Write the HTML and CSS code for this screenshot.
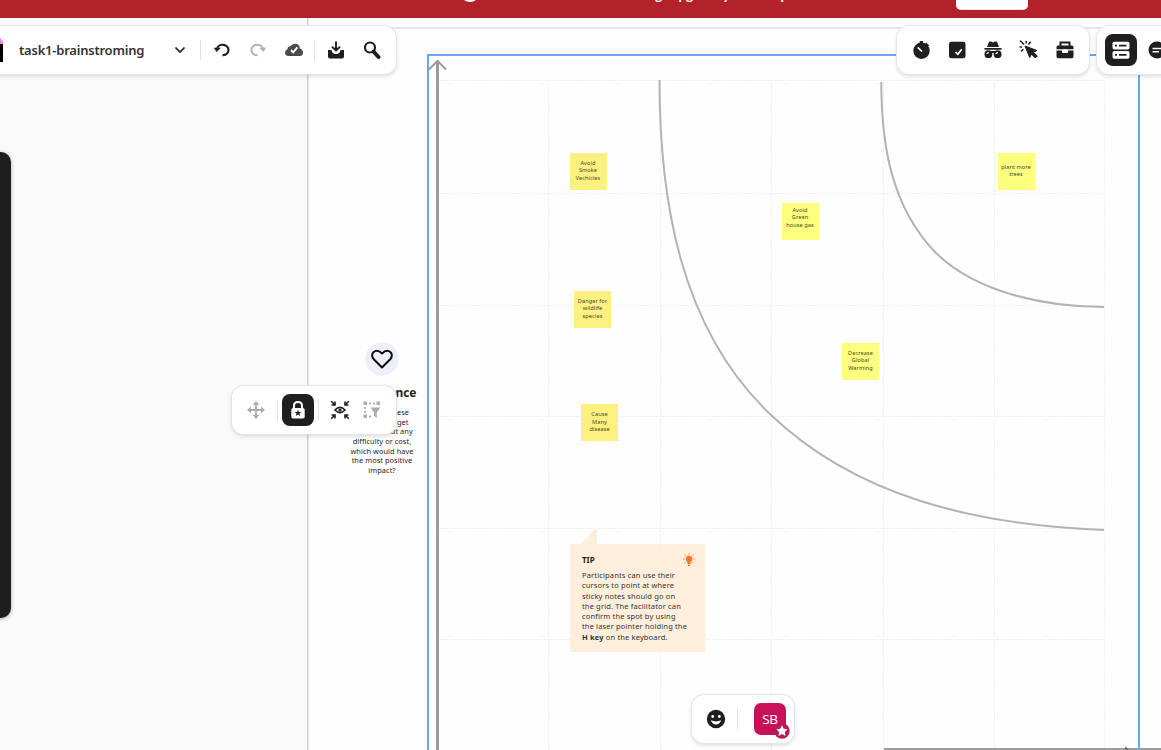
FILE: index.html
```
<!DOCTYPE html>
<html lang="en">
<head>
<meta charset="utf-8">
<title>task1-brainstroming</title>
<link rel="stylesheet" href="styles.css">
</head>
<body>
<div class="app">
  <main class="board">
    <svg class="lines" width="1161" height="750" viewBox="0 0 1161 750" fill="none">
      <rect x="308" y="18" width="900" height="800" fill="#fefefe" stroke="none"/>
      <path d="M308 28H1161" stroke="#e8e8e8" stroke-width="2"/>
      <path d="M307.800 18V750" stroke="#cfcfcf" stroke-width="1.400"/>
      <g stroke="#f3f3f3" stroke-dasharray="9 1.500">
        <path d="M439 80.500H1105M439 193.500H1105M439 305.500H1105M439 416.500H1105M439 528.500H1105M439 639.500H1105"/>
        <path d="M548.500 82V750M660.500 82V750M771.500 82V750M883.500 82V750M994.500 82V750M1104.500 82V750"/>
      </g>
      <g stroke="#b3b3b3" stroke-width="2">
        <path d="M659.500 80C659.500 200 680 329 771 415C856 496 974 525 1104 530"/>
        <path d="M881.300 82C881.300 144 891 206 935 252C975 292 1044 307 1104 307"/>
      </g>
      <g stroke="#9c9c9c">
        <path d="M437.500 61V750" stroke-width="3"/>
        <path d="M429 69.500L437.500 61L446 69.500" stroke-width="2"/>
        <path d="M884 749.500H1161" stroke-width="3"/>
        <path d="M1125 747.500L1128 750" stroke="#666" stroke-width="2"/>
      </g>
      <path d="M428 750V55H1139V750" stroke="#68a5f3" stroke-width="2"/>
    </svg>

    <section class="importance">
      <svg class="heart" width="34" height="34" viewBox="0 0 34 34"><circle cx="17" cy="17" r="16.700" fill="#efeff9"/><path d="M17 25.500L8.800 17.300C4 12 10.500 5 17 11.500C23.500 5 30 12 25.200 17.300Z" fill="none" stroke="#0c0c0c" stroke-width="2" stroke-linejoin="round"/></svg>
      <h2>Importance</h2>
      <p>If each of these<br>tasks could get<br>done without any<br>difficulty or cost,<br>which would have<br>the most positive<br>impact?</p>
    </section>

    <div class="note n1">Avoid<br>Smoke<br>Vechicles</div>
    <div class="note bright n2">Avoid<br>Green<br>house gas</div>
    <div class="note bright n3">plant more<br>trees</div>
    <div class="note n4">Danger for<br>wildlife<br>species</div>
    <div class="note bright n5">Decrease<br>Global<br>Warming</div>
    <div class="note n6">Cause<br>Many<br>disease</div>

    <aside class="tip">
      <svg class="tip-tail" width="17" height="17" viewBox="0 0 17 17"><path d="M0 17L17 0V17Z" fill="#fcf0dc"/></svg>
      <header><h3>TIP</h3>
        <svg width="12" height="14" viewBox="0 0 12 14" fill="#ff7135"><circle cx="6" cy="6" r="3.200"/><path d="M4.500 8H7.500V11H4.500ZM5 11.500H7V13H5Z"/><path d="M6 .3V1.700M.2 6H1.600M10.400 6H11.800M1.600 1.700L2.600 2.700M10.400 1.700L9.400 2.700M1.600 10.200L2.500 9.300M10.400 10.200L9.500 9.300" stroke="#ff7135"/></svg>
      </header>
      <p>Participants can use their<br>cursors to point at where<br>sticky notes should go on<br>the grid. The facilitator can<br>confirm the spot by using<br>the laser pointer holding the<br><b>H key</b> on the keyboard.</p>
    </aside>
  </main>

  <header class="banner">
    <span class="banner-dot"></span>
    <span class="banner-text">Your trial is ending. Upgrade your free plan</span>
    <span class="banner-button"></span>
  </header>

  <nav class="bar file-bar">
    <svg class="brand" width="4" height="26" viewBox="0 0 4 26"><path d="M0 1Q3 3 3 7H0Z" fill="#ff80f5"/><path d="M0 7H3V25H0Z" fill="#000"/></svg>
    <span class="file-name">task1-brainstroming</span>
    <svg class="chevron" width="12" height="8" viewBox="0 0 12 8"><path d="M1.500 1.500L6 6L10.500 1.500" fill="none" stroke="#1f1f1f" stroke-width="1.700"/></svg>
    <i class="sep"></i>
    <svg class="undo" width="18" height="18" viewBox="0 0 18 18"><path d="M4 8A5.800 5.200 0 1 1 9.500 14.200" fill="none" stroke="#1f1f1f" stroke-width="2.200"/><path d="M.8 6.800H8L3.500 11Z" fill="#1f1f1f"/></svg>
    <svg class="redo" width="18" height="18" viewBox="0 0 18 18"><path d="M14 8A5.800 5.200 0 1 0 8.500 14.200" fill="none" stroke="#b5b5b5" stroke-width="2.200"/><path d="M17.200 6.800H10L14.500 11Z" fill="#b5b5b5"/></svg>
    <svg class="cloud" width="20" height="14" viewBox="0 0 20 14"><path d="M5 13Q1 13 1 9.500Q1 7 3.500 6.300Q3.500 3.500 6.300 3.300Q8 .7 11 .8Q15.500 1 16 5.500Q19 6.700 19 9.800Q19 13 15.500 13Z" fill="#4b4b4b"/><path d="M7 7L9.200 9.300L13.400 4.300" fill="none" stroke="#fff" stroke-width="1.900"/></svg>
    <i class="sep"></i>
    <svg class="save" width="18" height="20" viewBox="0 0 18 20"><path d="M1 10H4.500Q5 14 9 14Q13 14 13.500 10H17V16.500Q17 18.500 15 18.500H3Q1 18.500 1 16.500Z" fill="#1f1f1f"/><path d="M9 1.500V10M5 6.800L9 10.500L13 6.800" fill="none" stroke="#1f1f1f" stroke-width="1.900"/></svg>
    <svg class="search" width="18" height="20" viewBox="0 0 18 20"><circle cx="7" cy="7.500" r="5" fill="none" stroke="#1f1f1f" stroke-width="2.200"/><path d="M10.500 11.500L15.500 17" stroke="#1f1f1f" stroke-width="4" stroke-linecap="round"/></svg>
  </nav>

  <nav class="bar tool-bar">
    <svg width="20" height="20" viewBox="0 0 20 20"><circle cx="10.500" cy="10.800" r="8.200" fill="#1f1f1f"/><path d="M8.800 1H12V4H8.800ZM15 2.500L18.300 5.500L16 7L13.500 5Z" fill="#1f1f1f"/><path d="M6.700 7.300L11 11.500" stroke="#fff" stroke-width="1.700"/></svg>
    <svg width="20" height="20" viewBox="0 0 20 20"><rect x="2" y="1.700" width="16.500" height="16.500" rx="2.200" fill="#1f1f1f"/><path d="M8.500 12L10.900 14.300L14.700 9.300" fill="none" stroke="#fff" stroke-width="1.700"/></svg>
    <svg width="20" height="20" viewBox="0 0 20 20" fill="#1f1f1f"><path d="M4 7L6 1.800Q8 1.200 10 2.500Q12 1.200 14 1.800L16 7ZM1.500 8H18.500V9.800H1.500Z"/><circle cx="5.400" cy="14.200" r="3.900"/><circle cx="14.600" cy="14.200" r="3.900"/><path d="M3 11H17V13H3Z"/><path d="M3.800 14Q4 12.700 5.800 12.700M13 14Q13.200 12.700 15 12.700" fill="none" stroke="#fff" stroke-width="1.200"/></svg>
    <svg width="20" height="20" viewBox="0 0 20 20"><path d="M6 6L18 10.500L14.400 12.200L18.300 16L16.300 18L12.500 14.200L10.700 17.500Z" fill="#1f1f1f" stroke="#1f1f1f" stroke-linejoin="round"/><path d="M1.500 1L4.500 4M7.200 1.500V2.700M1.200 7H2.500M9.800 4L11.300 2.300M2.500 11L3.900 9.500" stroke="#1f1f1f" stroke-width="1.600" stroke-linecap="round"/></svg>
    <svg width="20" height="20" viewBox="0 0 20 20"><path d="M5.500 6V2.500H14.500V6" fill="none" stroke="#1f1f1f" stroke-width="2"/><path d="M3 5.500H17Q18.500 5.500 18.500 7V9.300H1.500V7Q1.500 5.500 3 5.500ZM1.500 10.500H7V12Q7 13 8 13H12Q13 13 13 12V10.500H18.500V16.500Q18.500 18.200 16.800 18.200H3.200Q1.500 18.200 1.500 16.500Z" fill="#1f1f1f"/><path d="M8.300 9.300H11.700V12H8.300Z" fill="#fff"/></svg>
  </nav>

  <nav class="bar panel-bar">
    <span class="active-tool"><svg width="20" height="20" viewBox="0 0 20 20"><rect x="1.500" y="1.700" width="17" height="7.800" rx="1.800" fill="#fff"/><rect x="1.500" y="11" width="17" height="7.800" rx="1.800" fill="#fff"/><path d="M4 5.600H6M8 5.600H15.500M4 14.900H6M8 14.900H15.500" stroke="#1f1f1f" stroke-width="1.600"/></svg></span>
    <svg class="chat" width="18" height="18" viewBox="0 0 18 18"><circle cx="9" cy="9" r="8.500" fill="#1f1f1f"/><path d="M4.500 7.500H14M4.500 10.700H11" stroke="#fff" stroke-width="1.600"/></svg>
  </nav>

  <nav class="bar selection-bar">
    <svg class="move" width="20" height="20" viewBox="0 0 20 20"><path d="M10 3V17M3 10H17" stroke="#adadad" stroke-width="1.800"/><path d="M10 1L13.500 5H6.500ZM10 19L6.500 15H13.500ZM1 10L5 6.500V13.500ZM19 10L15 13.500V6.500Z" fill="#adadad"/></svg>
    <i class="sep"></i>
    <span class="active-tool"><svg width="16" height="20" viewBox="0 0 16 20"><path d="M4 9V5.500Q4 2 8 2Q12 2 12 5.500V9" fill="none" stroke="#fff" stroke-width="2"/><rect x="1.300" y="8" width="13.400" height="10.500" rx="1.800" fill="#fff"/><path d="M8 9.800L9 12H11.400L9.500 13.500L10.200 16L8 14.600L5.800 16L6.500 13.500L4.600 12H7Z" fill="#1f1f1f"/></svg></span>
    <i class="sep"></i>
    <svg class="eye" width="20" height="20" viewBox="0 0 20 20"><path d="M5 10Q10 4.800 15 10Q10 15.200 5 10Z" fill="none" stroke="#1f1f1f" stroke-width="1.700"/><circle cx="10" cy="10" r="1.600" fill="#1f1f1f"/><path d="M1.200 1.200L4.500 4.500M18.800 1.200L15.500 4.500M1.200 18.800L4.500 15.500M18.800 18.800L15.500 15.500M5 1.500V5H1.500M15 1.500V5H18.500M5 18.500V15H1.500M15 18.500V15H18.500" fill="none" stroke="#1f1f1f" stroke-width="1.600"/></svg>
    <svg class="filter" width="20" height="20" viewBox="0 0 20 20" fill="#adadad"><path d="M1.500 1.500H5V5H1.500ZM14.500 1.500H18V5H14.500ZM1.500 14.500H5V18H1.500ZM7 2.500H9V4.500H7ZM11 2.500H13V4.500H11ZM2.200 7H4V9H2.200ZM2.200 11H4V13H2.200ZM7 15.500H9V17.500H7Z"/><path d="M8.500 7.500H18.500L14.800 12.500V18L12 16V12.500Z"/></svg>
  </nav>

  <nav class="bar user-bar">
    <svg width="20" height="20" viewBox="0 0 20 20"><circle cx="10" cy="10" r="9.200" fill="#1f1f1f"/><circle cx="6.700" cy="7.500" r="1.400" fill="#fff"/><circle cx="13.300" cy="7.500" r="1.400" fill="#fff"/><path d="M4.700 11.300Q10 13.500 15.300 11.300Q13.500 15.500 10 15.500Q6.500 15.500 4.700 11.300Z" fill="#fff"/></svg>
    <i class="sep"></i>
    <span class="avatar">SB
      <svg class="host" width="16" height="16" viewBox="0 0 16 16"><circle cx="8" cy="8" r="7.700" fill="#b71b4f"/><path d="M8 2.200L9.700 5.800L13.600 6.300L10.800 9L11.500 13L8 11.100L4.500 13L5.200 9L2.400 6.300L6.300 5.800Z" fill="#fff"/></svg>
    </span>
  </nav>

  <div class="side-panel"></div>
</div>
</body>
</html>
```

FILE: styles.css
```
* { box-sizing: border-box; }
body { margin: 0; font-family: "Noto Sans", "Open Sans", sans-serif; color: #1f1f1f; }
.app { position: relative; width: 1161px; height: 750px; overflow: hidden; background: #fafafa; }
svg { display: block; flex: none; }

.board { position: absolute; inset: 0; }
.lines { position: absolute; inset: 0; }

.banner { position: absolute; left: 0; right: 0; top: -22px; height: 40px; display: flex; align-items: flex-end; background: #b3212b; }
.banner-dot { width: 20px; height: 20px; margin: 0 0 16px 460px; border-radius: 50%; background: #fff; }
.banner-text { width: 326px; margin: 0 0 13px 0; text-align: right; font: 700 13.500px/20px Lato, sans-serif; color: #fff; white-space: nowrap; }
.banner-button { width: 72px; height: 30px; margin: 0 0 8px 150px; border-radius: 5px; background: #fff; border-bottom: 1px solid #e6e6e6; }

.importance { position: absolute; left: 322px; top: 342px; width: 120px; display: flex; flex-direction: column; align-items: center; text-align: center; }
.importance h2 { margin: 8px 0 6px; font: 700 12px/18px "Noto Sans", sans-serif; letter-spacing: -.200px; }
.importance p { margin: 0; font: 7.400px/9.650px "Noto Sans", sans-serif; letter-spacing: .050px; white-space: nowrap; }

.note { position: absolute; width: 37px; height: 37px; display: flex; align-items: center; justify-content: center; text-align: center; background: #fbf080; font: 5.600px/7.500px "Noto Sans", sans-serif; letter-spacing: .080px; color: #4d4a28; white-space: nowrap; }
.bright { background: #fcfe7d; }
.n1 { left: 569.5px; top: 152.5px; }
.n2 { left: 781.5px; top: 202.5px; padding-bottom: 6px; }
.n3 { left: 997.5px; top: 152.5px; }
.n4 { left: 574px; top: 290.5px; }
.n5 { left: 842px; top: 342.5px; }
.n6 { left: 581px; top: 404px; }

.tip { position: absolute; left: 570px; top: 544px; width: 135px; height: 108px; padding: 9px 10px 0 12px; background: rgba(252, 236, 212, .82); }
.tip-tail { position: absolute; left: 10px; top: -17px; }
.tip header { display: flex; justify-content: space-between; height: 17px; }
.tip h3 { margin: 0; font: 700 8px/14px "Noto Sans", sans-serif; }
.tip p { margin: 0; font: 7.500px/10.300px "Noto Sans", sans-serif; letter-spacing: .150px; color: #333; white-space: nowrap; }

.bar { position: absolute; display: flex; align-items: center; height: 48px; background: #fff; border-radius: 12px; box-shadow: 0 0 0 1px #e6e6e6, 0 2px 5px rgba(0, 0, 0, .16); }
.sep { width: 1px; height: 20px; background: #e2e2e2; flex: none; }
.active-tool { width: 32px; height: 32px; flex: none; display: flex; align-items: center; justify-content: center; border-radius: 8px; background: #1f1f1f; }

.file-bar { left: -12px; top: 26px; width: 408px; padding-left: 12px; }
.brand { margin-right: 15px; }
.file-name { width: 125px; font-size: 13px; font-weight: 600; letter-spacing: -.220px; white-space: nowrap; color: #333; }
.chevron { margin: 0 14px 0 30px; }
.undo { margin: 0 18px 0 12px; }
.cloud { margin: 0 10px 0 17px; }
.save { margin: 0 18px 0 12px; }

.tool-bar { left: 897px; top: 26px; width: 192px; padding-left: 14px; gap: 16px; }
.panel-bar { left: 1097px; top: 26px; width: 100px; padding-left: 8px; gap: 11px; }

.selection-bar { left: 232px; top: 386px; width: 164px; padding-left: 14px; }
.move { margin-right: 11px; }
.selection-bar .active-tool { margin: 0 4px; }
.eye { margin: 0 12px 0 11px; }

.user-bar { left: 692px; top: 695px; width: 102px; padding-left: 14px; }
.user-bar .sep { margin: 0 16px 0 11px; }
.avatar { position: relative; width: 32px; height: 32px; border-radius: 7px; background: #c9115a; color: #fff; font: 13.500px/32px "Open Sans", sans-serif; letter-spacing: -.300px; text-align: center; }
.host { position: absolute; left: 20px; top: 20px; }

.side-panel { position: absolute; left: -20px; top: 152px; width: 31px; height: 466px; border-radius: 10px; background: #1f1f1f; box-shadow: 0 1px 4px rgba(0, 0, 0, .3); }
```
